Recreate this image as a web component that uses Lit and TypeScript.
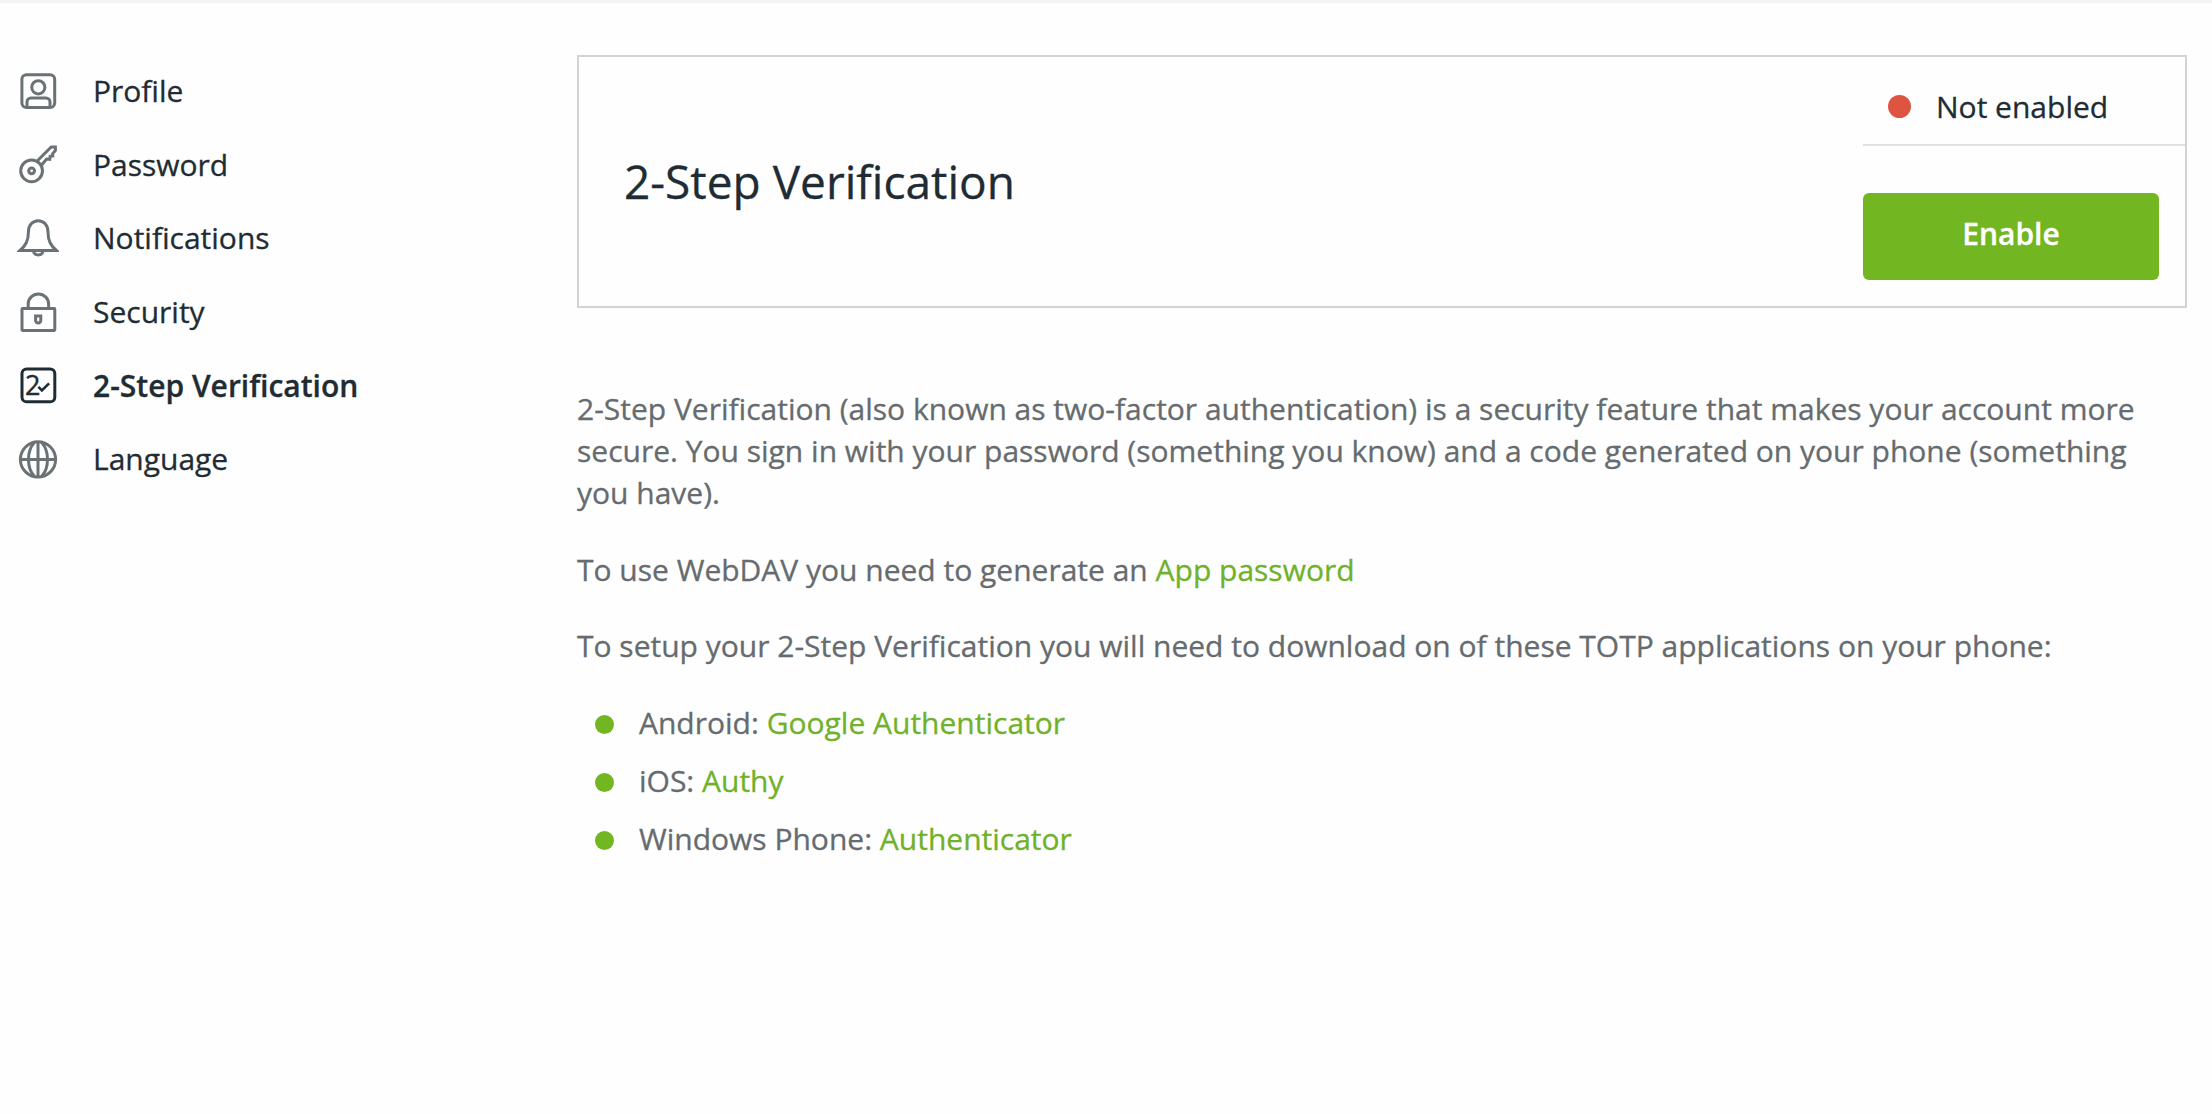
import { LitElement, html, css, svg } from 'lit';
import { customElement, property, state } from 'lit/decorators.js';
import { classMap } from 'lit/directives/class-map.js';

const ICONS = {
  profile: svg`
    <rect x="4.9" y="4.7" width="32.8" height="32.8" rx="4.6" />
    <circle cx="21.3" cy="17.3" r="6.6" />
    <path d="M10 37.5V32a4 4 0 0 1 4-4h15a4 4 0 0 1 4 4v5.5" />
  `,
  password: svg`
    <circle cx="14.6" cy="27.8" r="10.9" />
    <circle cx="14.6" cy="27.8" r="2.9" />
    <path d="M20.2 18 34.2 3.9h4.2v3.6l-2.8 3.2.2 2.2-2.6.4-.4 3-3.2-.2-5.4 6.4" />
  `,
  notifications: svg`
    <path d="M3 33.4C8.6 28.6 11.4 24 11.4 15 11.4 8 15.6 3.7 21.2 3.7S31 8 31 15c0 9 2.8 13.6 8.4 18.4Z" />
    <path d="M16.5 34.5a4.8 4 0 0 0 9.5 0" />
  `,
  security: svg`
    <rect x="5" y="17.6" width="32.8" height="21.8" rx=".6" />
    <path d="M11.2 17.5V13a10.2 10 0 0 1 20.4 0v4.5" />
    <path d="M18.6 24.9h5.2v4.4a2.6 2.8 0 0 1-5.2 0Z" />
  `,
  verification: svg`
    <rect x="5" y="5" width="32.8" height="32.8" rx="4.6" />
    <text class="digit" x="8" y="31.4">2</text>
    <path class="check" d="m21.4 22.8 3.5 3.6 7.2-7" />
  `,
  language: svg`
    <circle cx="21" cy="21.4" r="17.6" />
    <path d="M21 3.7v35.4M3.3 21.4h35.4" />
    <path d="M17.5 4.3C9.5 13 9.5 29.8 17.5 38.5M24.5 4.3c8 8.7 8 25.5 0 34.2" />
  `
};

type IconName = keyof typeof ICONS;

@customElement('settings-menu')
export class SettingsMenu extends LitElement {
  static styles = css`
    :host {
      display: block;
    }

    .item {
      display: flex;
      align-items: center;
      gap: 34px;
      height: 73.6px;
      color: #1f2c33;
      font-size: 30px;
      text-decoration: none;
      white-space: nowrap;
    }

    .item.active {
      font-weight: 600;
    }

    .icon {
      flex: none;
      width: 42px;
      height: 42px;
      fill: none;
      stroke: #6b7275;
      stroke-width: 3;
    }

    .active .icon {
      stroke: #1f2c33;
    }

    .active .digit {
      fill: #1f2c33;
      stroke-width: 0.4;
      font-size: 27px;
      font-weight: 400;
    }

    .check {
      stroke-width: 2.6;
    }
  `;

  @property({ type: String }) active = '';

  private _items: { icon: IconName; label: string }[] = [
    { icon: 'profile', label: 'Profile' },
    { icon: 'password', label: 'Password' },
    { icon: 'notifications', label: 'Notifications' },
    { icon: 'security', label: 'Security' },
    { icon: 'verification', label: '2-Step Verification' },
    { icon: 'language', label: 'Language' }
  ];

  render() {
    return html`
      <nav>
        ${this._items.map(({ icon, label }) => html`
          <a class=${classMap({ item: true, active: icon === this.active })}>
            <svg class="icon" viewBox="0 0 42 42">${ICONS[icon]}</svg>
            <span>${label}</span>
          </a>
        `)}
      </nav>
    `;
  }
}

@customElement('verification-card')
export class VerificationCard extends LitElement {
  static styles = css`
    :host {
      display: flex;
      justify-content: space-between;
      box-sizing: border-box;
      height: 253px;
      border: 2px solid #d0d4d4;
      color: #1f2c33;
    }

    .title {
      align-self: center;
      margin: 0 0 1px 45px;
      font-size: 46px;
      font-weight: 400;
      line-height: 64px;
    }

    .side {
      width: 322px;
    }

    .status {
      display: flex;
      align-items: center;
      gap: 25px;
      box-sizing: border-box;
      height: 89px;
      padding: 12px 0 0 25px;
      border-bottom: 2px solid #dfe2e2;
      font-size: 30px;
      line-height: 42px;
    }

    .dot {
      width: 23px;
      height: 23px;
      border-radius: 50%;
      background: #dd5441;
    }

    .dot.on {
      background: #72b622;
    }

    .button {
      display: block;
      width: 296px;
      height: 87px;
      margin-top: 47px;
      padding: 0 0 7px;
      border: none;
      border-radius: 6px;
      background: #72b622;
      color: #fff;
      font-family: inherit;
      font-size: 30px;
      font-weight: 600;
      cursor: pointer;
    }
  `;

  @state() private _enabled = false;

  private _toggle() {
    this._enabled = !this._enabled;
  }

  render() {
    return html`
      <h1 class="title">2-Step Verification</h1>
      <div class="side">
        <div class="status">
          <span class=${classMap({ dot: true, on: this._enabled })}></span>
          <span>${this._enabled ? 'Enabled' : 'Not enabled'}</span>
        </div>
        <button class="button" @click=${this._toggle}>
          ${this._enabled ? 'Disable' : 'Enable'}
        </button>
      </div>
    `;
  }
}

@customElement('app-root')
export class AppRoot extends LitElement {
  static styles = css`
    :host {
      display: block;
      box-sizing: border-box;
      min-height: 100vh;
      border-top: 3px solid #f3f5f4;
      background: #fefefe;
      font-family: 'Open Sans', 'Noto Sans', sans-serif;
      -webkit-text-stroke: 0.3px;
    }

    .layout {
      display: grid;
      grid-template-columns: 560px 1610px;
      padding: 52px 0 0 17px;
    }

    settings-menu {
      margin-top: -1px;
    }

    .content {
      padding: 80px 30px 0 0;
      color: #656b6e;
      font-size: 30px;
      line-height: 42px;
    }

    p {
      margin: 0 0 34.5px;
    }

    a {
      color: #70b12a;
      text-decoration: none;
    }

    ul {
      display: grid;
      gap: 16px;
      margin: 0;
      padding: 0 0 0 18px;
      list-style: none;
    }

    li {
      display: flex;
      align-items: center;
      gap: 25px;
    }

    li::before {
      content: '';
      width: 19px;
      height: 19px;
      margin-top: 3px;
      border-radius: 50%;
      background: #72b622;
    }
  `;

  private _apps = [
    { platform: 'Android', name: 'Google Authenticator' },
    { platform: 'iOS', name: 'Authy' },
    { platform: 'Windows Phone', name: 'Authenticator' }
  ];

  render() {
    return html`
      <div class="layout">
        <settings-menu active="verification"></settings-menu>
        <main>
          <verification-card></verification-card>
          <div class="content">
            <p>
              2-Step Verification (also known as two-factor authentication) is a security feature that
              makes your account more secure. You sign in with your password (something you know) and
              a code generated on your phone (something you have).
            </p>
            <p>To use WebDAV you need to generate an <a>App password</a></p>
            <p>
              To setup your 2-Step Verification you will need to download on of these TOTP
              applications on your phone:
            </p>
            <ul>
              ${this._apps.map((app) => html`
                <li><span>${app.platform}: <a>${app.name}</a></span></li>
              `)}
            </ul>
          </div>
        </main>
      </div>
    `;
  }
}
